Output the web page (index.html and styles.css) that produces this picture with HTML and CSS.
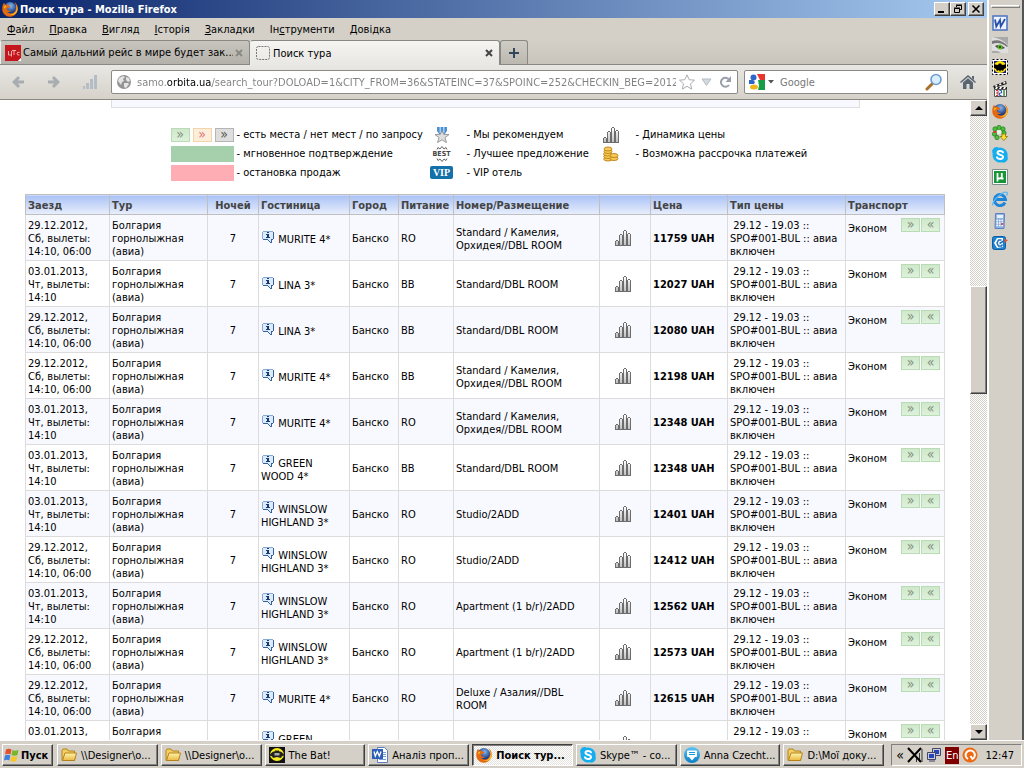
FILE: index.html
```html
<!DOCTYPE html>
<html lang="uk">
<head>
<meta charset="utf-8">
<title>Поиск тура - Mozilla Firefox</title>
<link rel="stylesheet" href="styles.css">
</head>
<body>
<svg class="defs" aria-hidden="true">
  <defs>
    <linearGradient id="barv" x2="0" y2="1"><stop offset="0" stop-color="#fff"/><stop offset="1" stop-color="#bbb"/></linearGradient>
    <linearGradient id="blue" x2="0" y2="1"><stop offset="0" stop-color="#5cc4f5"/><stop offset="1" stop-color="#0a7fc4"/></linearGradient>
    <linearGradient id="fold" x2="0" y2="1"><stop offset="0" stop-color="#fff6b0"/><stop offset="1" stop-color="#eab840"/></linearGradient>
    <radialGradient id="globe" cx=".55" cy=".3"><stop offset="0" stop-color="#8bb8e8"/><stop offset="1" stop-color="#173f8c"/></radialGradient>
    <symbol id="i-chart" viewBox="0 0 16 16"><path fill="url(#barv)" d="M0 11h4V5h4V1h4v4h4v11H0z"/><path fill="#6c6c6c" d="M0 11h1v4H0zM1 10h2v1H1zM3 11h1v4H3zM4 5h1v10H4zM5 4h2v1H5zM7 5h1v10H7zM9 0h2v1H9zM8 1h1v14H8zM11 1h1v14h-1zM12 4h1v11h-1zM13 3h2v1h-2zM15 4h1v11h-1zM0 15h16v1H0z"/></symbol>
    <symbol id="i-info" viewBox="0 0 12 12"><path fill="#dcebfb" d="M1 0h10v1h1v7h-2v4L6 9H1V8H0V1h1z"/><path fill="#86a9d6" d="M1 0h10v1H1zM0 1h1v7H0z"/><path fill="#35629f" d="M11 1h1v7h-1zM1 8h5v1H1zM9 8h2v1H9zM6 9h1v1H6zM7 10h1v1H7zM8 11h2v1H8zM9 9h1v2H9z"/><path fill="#1b3a70" d="M5 1h2v1H5zM4 3h3v3h1v1H4V6h1V4H4z"/></symbol>
    <symbol id="i-firefox" viewBox="0 0 16 16"><circle cx="8" cy="7.500" r="6.500" fill="url(#globe)"/><path fill="#e36a10" d="M1 3.500Q0 6 .3 9c.5 4 4 7 8 6.700 4-.2 7.300-3.500 7.500-7.700C16 5 14.500 2.500 12.500 1c1.500 2.500 2 4 1.500 6.500C13.500 11 11.500 12.500 9 12.500c-1.500 0-3-.7-3.700-1.800 1.500.6 2.700.4 3.900-.6l-3-.6C5 9 4.800 7.900 5.300 7.100l2-.3L8.500 5 6 4.500 5.800 2.700 4.500 4H3.300L2 1.800z"/><path fill="#fdc21d" d="M13.200 2.500c1.700 2.500 1.900 5.500.6 7.700-1.400 2.600-4.300 3.700-7 2.600 3 2.200 7 .8 8.200-2.300 1.200-3 .2-6-1.800-8zM2.500 5l2-.5-1 2-1.500 1z"/></symbol>
    <symbol id="i-word" viewBox="0 0 16 16"><path fill="#eef4ff" stroke="#4a72c0" stroke-width="1.500" d="M1 1h14v14H1z"/><path fill="none" stroke="#2450a8" stroke-width="1.800" d="M3 4.500l1.300 7L8 5l.7 6.500L13 4"/></symbol>
    <symbol id="i-worddoc" viewBox="0 0 16 16"><path fill="#fff" stroke="#5b7fc0" d="M5.500.5h7l3 3v12h-10z"/><path stroke="#7d9cd0" d="M11 5.500h3M11 7.500h3M11 9.500h3M7 12.500h7"/><path fill="#2d5fb8" d="M0 2h11v10H0z"/><path fill="none" stroke="#fff" stroke-width="1.300" d="M2 4.500L3.300 9l2-4.500 2 4.500L9 4.500"/></symbol>
    <symbol id="i-folder" viewBox="0 0 16 16"><path fill="#f3cf62" stroke="#b5821a" stroke-linejoin="round" d="M1 13.500v-10l1-1.500h4l1.500 2h6v9.500z"/><path fill="url(#fold)" stroke="#b5821a" stroke-linejoin="round" d="M1.500 13.500L4 6h11.500l-2 7.500z"/></symbol>
    <symbol id="i-bat" viewBox="0 0 16 16"><path fill="#111" d="M0 0h16v16H0z"/><ellipse cx="8" cy="7.500" rx="7" ry="6.500" fill="#f6ec20"/><path fill="#222" d="M0 9q3-5 5.500-4.500Q7 2.500 8 4q1-1.500 2.500.5Q13 4 16 9q-3-1-4 2l-4-1-4 1Q3 8 0 9z"/><path fill="#aaa" d="M5.500 6h5v2.500h-5z"/></symbol>
    <symbol id="i-bat2" viewBox="0 0 16 16"><path fill="#fff" stroke="#000" stroke-dasharray="2 2" d="M.5.5h15v15H.5z"/><path fill="#18187a" d="M2 2h12v12H2z"/><ellipse cx="8" cy="8" rx="6.500" ry="6" fill="#ffe800"/><path fill="#000" d="M2 5l3 1 1.500-.5L7 4l1 1 1-1 .5 1.500L11 6l3-1v4l-2 1-1 2-2-1-1 2-1-2-2 1-1-2-2-1z"/></symbol>
    <symbol id="i-skype" viewBox="0 0 16 16"><path fill="#14aef0" d="M4.500 0A4.500 4.500 0 0 0 .7 6.500 7.500 7.500 0 0 0 9.600 15.300 4.500 4.500 0 0 0 15.500 9.500 7.500 7.500 0 0 0 6.800.7 4 4 0 0 0 4.500 0z"/><path fill="none" stroke="#fff" stroke-width="2" stroke-linecap="round" d="M11 5.300C10 3.500 5.500 3.300 5.500 5.800S11 7.500 11 10s-4.800 2.400-6 .4"/></symbol>
    <symbol id="i-chat" viewBox="0 0 16 16"><circle cx="8" cy="8" r="8" fill="url(#blue)"/><path fill="#fff" d="M4 3.500h8q1 0 1 1V9q0 1-1 1h-1l-3 3.500L5 10H4Q3 10 3 9V4.500q0-1 1-1z"/><path stroke="#179bdc" d="M5 5.500h6M5 7.500h6"/></symbol>
    <symbol id="i-win" viewBox="0 0 16 16"><path fill="#e3502b" d="M2 2.500q3-1.500 5.500 0l-1 5q-2.500-1.500-5.500 0z"/><path fill="#76b82a" d="M8.500 3q2.500 1.500 6 0l-1 5q-3 1.500-6 0z"/><path fill="#3c7fe0" d="M1 8.500q3-1.500 5.300 0l-1 5q-2.500-1.500-5.300 0z"/><path fill="#f8c62a" d="M7.300 9q2.700 1.500 6 0l-1 5q-3 1.500-6 0z"/></symbol>
    <symbol id="i-eye" viewBox="0 0 16 16"><path fill="#a9a9a9" d="M0 0h16v16H0z"/><path fill="#dedede" d="M0 0q9 1 16 8v8H9Q6 13 0 14z"/><path fill="#777" d="M0 4q8-3 16 5l-1 1Q8 4 0 7z"/><path fill="#444" d="M3 9q5-3 10 2-6 3-10-2z"/><circle cx="8" cy="10" r="2.500" fill="#62b82a"/><circle cx="8" cy="10" r="1" fill="#163a0a"/></symbol>
    <symbol id="i-movie" viewBox="0 0 16 16"><path fill="#222" d="M1 5L14 0l.8 3L2 7z"/><path fill="#fff" d="M3 4.500l2-.8.5 1.500-2 .7zM7 3l2-.8.5 1.500-2 .7zM11 1.500l2-.8.5 1.500-2 .7z"/><path fill="#222" d="M2 6h13v2.500H2z"/><path fill="#fff" d="M4 6h2l-1 2H3zM8 6h2L9 8H7zM12 6h2l-1 2h-2z"/><path fill="#f6f6f6" stroke="#555" d="M2.500 8.500h12v7h-12z"/><path fill="none" stroke="#c33" d="M4 9.500h2v5H4M4 12h2"/><path fill="none" stroke="#2560c0" d="M7.500 9.500h2V12h-2v2.500h2"/><path stroke="#278a3a" stroke-width="1.400" d="M12 9v6"/></symbol>
    <symbol id="i-icq" viewBox="0 0 16 16"><g fill="#4cc03a" stroke="#157018" stroke-width=".6"><circle cx="7" cy="2.500" r="2.200"/><circle cx="11" cy="4" r="2.200"/><circle cx="3" cy="4" r="2.200"/><circle cx="12" cy="8" r="2.200"/><circle cx="2.500" cy="9" r="2.200"/><circle cx="5" cy="12.500" r="2.200"/></g><circle cx="7" cy="7" r="2.300" fill="#e9f5df"/><path fill="#d33" d="M1.500 6h3v2h-3z"/><path fill="#ffe12a" stroke="#7a6a00" stroke-width=".7" d="M10 9h3.500v2.500h2L11.800 15.500l-3.800-4h2z"/></symbol>
    <symbol id="i-utor" viewBox="0 0 16 16"><path fill="#fff" stroke="#7c8f8a" d="M.5.5h15v15H.5z"/><path fill="#179436" d="M2 2h12v12H2z"/><path fill="none" stroke="#fff" stroke-width="1.800" d="M5.500 4v8.500M5.500 4v4q0 1.500 2 1.500 2.300 0 2.300-2V4v5.500h1.700"/></symbol>
    <symbol id="i-ie" viewBox="0 0 16 16"><path fill="none" stroke="#1d86d8" stroke-width="3" d="M13 11.500A5.500 5.500 0 1 1 13.500 8.500H4"/><path fill="none" stroke="#57b8f2" stroke-width="1.300" d="M1 14.500C-1 11 11-1 15 1.500q1 1-.5 3"/></symbol>
    <symbol id="i-calc" viewBox="0 0 16 16"><path fill="#8fb2e4" stroke="#5f82bd" d="M3.500.5h9l-.5 15H3z"/><path fill="#e8f2ff" d="M5 2h6v3H5z"/><path stroke="#fff" stroke-width="1.500" stroke-dasharray="1.500 1" d="M4.500 7.500h6.500M4.500 10h6.500M4.500 12.500h6.500"/><path fill="#d54" d="M9 10h2v2H9z"/></symbol>
    <symbol id="i-mail" viewBox="0 0 16 16"><rect x=".5" y="1.500" width="13" height="13" rx="2" fill="#1d82d0" stroke="#0b5ea5"/><path fill="#fff" d="M5 3h6v9l-6 1-3-5z"/><path fill="none" stroke="#1d6fc0" stroke-width="1.500" d="M9.500 5H6.500L5 8l1.500 3h3l1-1.500M7.500 8.500l5-3"/><path fill="#e4572a" d="M12 4l4 1-3 3z"/></symbol>
    <symbol id="i-globe" viewBox="0 0 16 16"><circle cx="8" cy="8" r="7" fill="#949494"/><path fill="#e4e4e4" d="M3 4l4-2 2 1-2 2 1 2-2 1-1 3-3-4zM10 3l3 1 1 3-2 1-2-2zM8 9l4 0 1 1-3 4-2-1z"/></symbol>
    <symbol id="i-medal" viewBox="0 0 16 16"><path fill="#4d8fd0" d="M3 0h10v4l-3 4H6L3 4z"/><path fill="#a8cff2" d="M5.500 0H7v6H5.500zM9 0h1.500v6H9z"/><path fill="#dedede" stroke="#888" stroke-width=".8" d="M8 3.500l1.700 3.800 5.300.3-4 3 1.500 5L8 12.800l-4.500 2.800 1.500-5-4-3 5.300-.3z"/></symbol>
    <symbol id="i-crown" viewBox="0 0 16 4"><path fill="none" stroke="#666" d="M3 3.500L4 1.500l2 1.500 2-2.500L10 3l2-1.500 1 2"/></symbol>
    <symbol id="i-coins" viewBox="0 0 16 16"><g fill="#f7ca55" stroke="#bc8018" stroke-width=".9"><ellipse cx="5" cy="13" rx="4.300" ry="2"/><ellipse cx="5" cy="10.500" rx="4.300" ry="2"/><ellipse cx="4.500" cy="8" rx="4" ry="2"/><ellipse cx="5" cy="5.500" rx="4" ry="2"/><ellipse cx="5" cy="3" rx="4" ry="2"/><ellipse cx="11" cy="12.500" rx="4" ry="2"/><ellipse cx="11" cy="9.500" rx="4" ry="2"/></g></symbol>
  </defs>
</svg>

<div class="desktop">
  <div class="window">
    <header class="titlebar">
      <svg class="ico"><use href="#i-firefox"/></svg>
      <h1 class="title">Поиск тура - Mozilla Firefox</h1>
      <div class="winbtns">
        <button class="wb" aria-label="Згорнути"><svg viewBox="0 0 12 10"><path d="M2 7h6v2H2z"/></svg></button><button class="wb" aria-label="Відновити"><svg viewBox="0 0 12 10"><path fill="none" stroke="#000" d="M4.500 3V1.500h5v4H8M4 1h6M2.500 4.500h5v4h-5zM2 4h6"/></svg></button>
        <button class="wb wb-close" aria-label="Закрити"><svg viewBox="0 0 12 10"><path fill="none" stroke="#000" stroke-width="1.600" d="M2.500 1.500l7 7M9.500 1.500l-7 7"/></svg></button>
      </div>
    </header>
    <nav class="menubar">
      <button class="menu"><u>Ф</u>айл</button><button class="menu"><u>П</u>равка</button><button class="menu"><u>В</u>игляд</button><button class="menu"><u>І</u>сторія</button><button class="menu"><u>З</u>акладки</button><button class="menu">Ін<u>с</u>трументи</button><button class="menu"><u>Д</u>овідка</button>
    </nav>
    <div class="tabs">
      <div class="tab">
        <svg class="ico" viewBox="0 0 16 16"><path fill="#c4161c" d="M0 0h16v13l-3 3H0z"/><path fill="none" stroke="#f2b0b0" d="M3.500 6v4h3V6M6.500 10v1.500M7 5.500h4M9 5.500V10M14.500 7.500q-2.500-1-2.500 1t2.500 1.500"/><path fill="#fff" d="M16 13v3h-3z"/></svg>
        <span class="tabname">Самый дальний рейс в мире будет зак...</span>
        <button class="x dim" aria-label="Закрити вкладку"><svg viewBox="0 0 8 8"><path d="M1 1l6 6M7 1L1 7"/></svg></button>
      </div>
      <div class="tab active">
        <svg class="ico" viewBox="0 0 16 16"><rect x="1.500" y="1.500" width="13" height="13" rx="2" fill="none" stroke="#777" stroke-dasharray="2 1"/></svg>
        <span class="tabname">Поиск тура</span>
        <button class="x" aria-label="Закрити вкладку"><svg viewBox="0 0 8 8"><path d="M1 1l6 6M7 1L1 7"/></svg></button>
      </div>
      <button class="newtab" aria-label="Нова вкладка"><svg viewBox="0 0 12 12"><path stroke="#33475c" stroke-width="2" d="M6 1v10M1 6h10"/></svg></button>
    </div>
    <div class="toolbar">
      <button class="nav" aria-label="Назад"><svg viewBox="0 0 14 14"><path fill="#a8adb1" d="M1 7l6-6 2 2-2 2.500h6v3H7L9 11l-2 2z"/></svg></button>
      <button class="nav" aria-label="Вперед"><svg viewBox="0 0 14 14"><path fill="#a8adb1" d="M13 7L7 1 5 3l2 2.500H1v3h6L5 11l2 2z"/></svg></button>
      <button class="nav" aria-label="Статистика"><svg viewBox="0 0 14 14"><path fill="#b4bcc5" d="M0 11h2v3H0zM3 8h3v6H3zM7 4h3v10H7zM11 0h3v14h-3z"/></svg></button>
      <div class="field url">
        <svg class="ico"><use href="#i-globe"/></svg>
        <input class="urlinput" aria-label="Адреса" value="samo.orbita.ua/search_tour?DOLOAD=1&amp;CITY_FROM=36&amp;STATEINC=37&amp;SPOINC=252&amp;CHECKIN_BEG=20121229">
        <button class="fb" aria-label="Закладка"><svg class="ico" viewBox="0 0 16 16"><path fill="#fff" stroke="#a9adb2" d="M8 .8l2.200 4.900 5.300.5-4 3.600 1.200 5.300L8 12.300l-4.700 2.800 1.200-5.300-4-3.600 5.300-.5z"/></svg></button>
        <button class="fb" aria-label="Журнал"><svg class="ico" viewBox="0 0 16 16"><path fill="#d5dade" stroke="#b4bcc4" d="M4 5h9l-4.500 6.500z"/></svg></button>
        <button class="fb" aria-label="Оновити"><svg class="ico" viewBox="0 0 16 16"><path fill="none" stroke="#98a1aa" stroke-width="2" d="M12 5.500A4.500 4.500 0 1 0 12 11"/><path fill="#98a1aa" d="M14 2v6H8.500z"/></svg></button>
      </div>
      <div class="field search">
        <svg class="ico" viewBox="0 0 16 16"><path fill="#fff" d="M0 0h16v16H0z"/><path fill="#e8342c" d="M8 0h8v6h-5z"/><path fill="#179c48" d="M9 6h7v10H9l1-4z"/><circle cx="4.500" cy="3.500" r="3" fill="#2d66c8"/><ellipse cx="5" cy="13" rx="4" ry="2.500" fill="#f1b51c"/><path fill="#2d66c8" d="M0 6h4l2 2-1 2-5 0z"/></svg>
        <svg class="drop" viewBox="0 0 6 4"><path fill="#555" d="M0 0h6L3 3.500z"/></svg>
        <input class="searchinput" aria-label="Пошук" placeholder="Google">
        <button class="fb" aria-label="Шукати"><svg class="mag" viewBox="0 0 18 18"><path stroke="#a9702a" stroke-width="3" stroke-linecap="round" d="M2 16l5-5"/><circle cx="11" cy="6.500" r="5" fill="#d9eefc" stroke="#6f9ccc" stroke-width="1.600"/></svg></button>
      </div>
      <button class="nav home" aria-label="Домівка"><svg viewBox="0 0 16 14"><path fill="#5a6572" d="M8 0l8 7-1 1-7-6-7 6-1-1zM12 1h2v4l-2-2zM3 7.500l5-4.300 5 4.300V14h-3.500V9h-3v5H3z"/></svg></button>
    </div>

    <div class="view">
      <main class="page">
        <div class="panel-end"></div>
        <div class="legend">
          <div class="chips"><span class="chip ok">»</span><span class="chip no">»</span><span class="chip ask">»</span></div><span>- есть места / нет мест / по запросу</span>
          <div class="lico"><svg class="ico"><use href="#i-medal"/></svg></div><span>- Мы рекомендуем</span>
          <div class="lico"><svg class="ico"><use href="#i-chart"/></svg></div><span>- Динамика цены</span>
          <div class="swatch green"></div><span>- мгновенное подтверждение</span>
          <div class="lico best"><svg><use href="#i-crown"/></svg><b>BEST</b><svg class="flip"><use href="#i-crown"/></svg></div><span>- Лучшее предложение</span>
          <div class="lico"><svg class="ico"><use href="#i-coins"/></svg></div><span>- Возможна рассрочка платежей</span>
          <div class="swatch red"></div><span>- остановка продаж</span>
          <div class="lico"><b class="vip">VIP</b></div><span>- VIP отель</span>
        </div>
        <table class="tours">
          <colgroup><col class="c1"><col class="c2"><col class="c3"><col class="c4"><col class="c5"><col class="c6"><col class="c7"><col class="c3"><col class="c9"><col class="c10"><col class="c11"></colgroup>
          <thead><tr><th>Заезд</th><th>Тур</th><th class="mid">Ночей</th><th>Гостиница</th><th>Город</th><th>Питание</th><th>Номер/Размещение</th><th></th><th>Цена</th><th>Тип цены</th><th>Транспорт</th></tr></thead>
          <tbody>
            <tr><td class="date">29.12.2012, Сб, вылеты: 14:10, 06:00</td><td>Болгария горнолыжная (авиа)</td><td class="mid">7</td><td><svg class="info"><use href="#i-info"/></svg>&nbsp;MURITE 4*</td><td>Банско</td><td>RO</td><td>Standard / Камелия, Орхидея//DBL ROOM</td><td class="dyn"><svg class="ico"><use href="#i-chart"/></svg></td><td class="price">11759 UAH</td><td>&nbsp;29.12 - 19.03 :: SPO#001-BUL :: авиа включен</td><td class="tr"><div class="fly"><span>Эконом</span><button class="chip ok">»</button><button class="chip ok">«</button></div></td></tr>
            <tr><td class="date">03.01.2013, Чт, вылеты: 14:10</td><td>Болгария горнолыжная (авиа)</td><td class="mid">7</td><td><svg class="info"><use href="#i-info"/></svg>&nbsp;LINA 3*</td><td>Банско</td><td>BB</td><td>Standard/DBL ROOM</td><td class="dyn"><svg class="ico"><use href="#i-chart"/></svg></td><td class="price">12027 UAH</td><td>&nbsp;29.12 - 19.03 :: SPO#001-BUL :: авиа включен</td><td class="tr"><div class="fly"><span>Эконом</span><button class="chip ok">»</button><button class="chip ok">«</button></div></td></tr>
            <tr><td class="date">29.12.2012, Сб, вылеты: 14:10, 06:00</td><td>Болгария горнолыжная (авиа)</td><td class="mid">7</td><td><svg class="info"><use href="#i-info"/></svg>&nbsp;LINA 3*</td><td>Банско</td><td>BB</td><td>Standard/DBL ROOM</td><td class="dyn"><svg class="ico"><use href="#i-chart"/></svg></td><td class="price">12080 UAH</td><td>&nbsp;29.12 - 19.03 :: SPO#001-BUL :: авиа включен</td><td class="tr"><div class="fly"><span>Эконом</span><button class="chip ok">»</button><button class="chip ok">«</button></div></td></tr>
            <tr><td class="date">29.12.2012, Сб, вылеты: 14:10, 06:00</td><td>Болгария горнолыжная (авиа)</td><td class="mid">7</td><td><svg class="info"><use href="#i-info"/></svg>&nbsp;MURITE 4*</td><td>Банско</td><td>BB</td><td>Standard / Камелия, Орхидея//DBL ROOM</td><td class="dyn"><svg class="ico"><use href="#i-chart"/></svg></td><td class="price">12198 UAH</td><td>&nbsp;29.12 - 19.03 :: SPO#001-BUL :: авиа включен</td><td class="tr"><div class="fly"><span>Эконом</span><button class="chip ok">»</button><button class="chip ok">«</button></div></td></tr>
            <tr><td class="date">03.01.2013, Чт, вылеты: 14:10</td><td>Болгария горнолыжная (авиа)</td><td class="mid">7</td><td><svg class="info"><use href="#i-info"/></svg>&nbsp;MURITE 4*</td><td>Банско</td><td>RO</td><td>Standard / Камелия, Орхидея//DBL ROOM</td><td class="dyn"><svg class="ico"><use href="#i-chart"/></svg></td><td class="price">12348 UAH</td><td>&nbsp;29.12 - 19.03 :: SPO#001-BUL :: авиа включен</td><td class="tr"><div class="fly"><span>Эконом</span><button class="chip ok">»</button><button class="chip ok">«</button></div></td></tr>
            <tr><td class="date">03.01.2013, Чт, вылеты: 14:10</td><td>Болгария горнолыжная (авиа)</td><td class="mid">7</td><td><svg class="info"><use href="#i-info"/></svg>&nbsp;GREEN WOOD 4*</td><td>Банско</td><td>BB</td><td>Standard/DBL ROOM</td><td class="dyn"><svg class="ico"><use href="#i-chart"/></svg></td><td class="price">12348 UAH</td><td>&nbsp;29.12 - 19.03 :: SPO#001-BUL :: авиа включен</td><td class="tr"><div class="fly"><span>Эконом</span><button class="chip ok">»</button><button class="chip ok">«</button></div></td></tr>
            <tr><td class="date">03.01.2013, Чт, вылеты: 14:10</td><td>Болгария горнолыжная (авиа)</td><td class="mid">7</td><td><svg class="info"><use href="#i-info"/></svg>&nbsp;WINSLOW HIGHLAND 3*</td><td>Банско</td><td>RO</td><td>Studio/2ADD</td><td class="dyn"><svg class="ico"><use href="#i-chart"/></svg></td><td class="price">12401 UAH</td><td>&nbsp;29.12 - 19.03 :: SPO#001-BUL :: авиа включен</td><td class="tr"><div class="fly"><span>Эконом</span><button class="chip ok">»</button><button class="chip ok">«</button></div></td></tr>
            <tr><td class="date">29.12.2012, Сб, вылеты: 14:10, 06:00</td><td>Болгария горнолыжная (авиа)</td><td class="mid">7</td><td><svg class="info"><use href="#i-info"/></svg>&nbsp;WINSLOW HIGHLAND 3*</td><td>Банско</td><td>RO</td><td>Studio/2ADD</td><td class="dyn"><svg class="ico"><use href="#i-chart"/></svg></td><td class="price">12412 UAH</td><td>&nbsp;29.12 - 19.03 :: SPO#001-BUL :: авиа включен</td><td class="tr"><div class="fly"><span>Эконом</span><button class="chip ok">»</button><button class="chip ok">«</button></div></td></tr>
            <tr><td class="date">03.01.2013, Чт, вылеты: 14:10</td><td>Болгария горнолыжная (авиа)</td><td class="mid">7</td><td><svg class="info"><use href="#i-info"/></svg>&nbsp;WINSLOW HIGHLAND 3*</td><td>Банско</td><td>RO</td><td>Apartment (1 b/r)/2ADD</td><td class="dyn"><svg class="ico"><use href="#i-chart"/></svg></td><td class="price">12562 UAH</td><td>&nbsp;29.12 - 19.03 :: SPO#001-BUL :: авиа включен</td><td class="tr"><div class="fly"><span>Эконом</span><button class="chip ok">»</button><button class="chip ok">«</button></div></td></tr>
            <tr><td class="date">29.12.2012, Сб, вылеты: 14:10, 06:00</td><td>Болгария горнолыжная (авиа)</td><td class="mid">7</td><td><svg class="info"><use href="#i-info"/></svg>&nbsp;WINSLOW HIGHLAND 3*</td><td>Банско</td><td>RO</td><td>Apartment (1 b/r)/2ADD</td><td class="dyn"><svg class="ico"><use href="#i-chart"/></svg></td><td class="price">12573 UAH</td><td>&nbsp;29.12 - 19.03 :: SPO#001-BUL :: авиа включен</td><td class="tr"><div class="fly"><span>Эконом</span><button class="chip ok">»</button><button class="chip ok">«</button></div></td></tr>
            <tr><td class="date">29.12.2012, Сб, вылеты: 14:10, 06:00</td><td>Болгария горнолыжная (авиа)</td><td class="mid">7</td><td><svg class="info"><use href="#i-info"/></svg>&nbsp;MURITE 4*</td><td>Банско</td><td>RO</td><td>Deluxe / Азалия//DBL ROOM</td><td class="dyn"><svg class="ico"><use href="#i-chart"/></svg></td><td class="price">12615 UAH</td><td>&nbsp;29.12 - 19.03 :: SPO#001-BUL :: авиа включен</td><td class="tr"><div class="fly"><span>Эконом</span><button class="chip ok">»</button><button class="chip ok">«</button></div></td></tr>
            <tr><td class="date">03.01.2013, Чт, вылеты: 14:10</td><td>Болгария горнолыжная (авиа)</td><td class="mid"></td><td><svg class="info"><use href="#i-info"/></svg>&nbsp;GREEN WOOD 4*</td><td></td><td></td><td>Standard/DBL ROOM</td><td class="dyn"><svg class="ico"><use href="#i-chart"/></svg></td><td class="price"></td><td>&nbsp;29.12 - 19.03 :: SPO#001-BUL :: авиа включен</td><td class="tr"><div class="fly"><span>Эконом</span><button class="chip ok">»</button><button class="chip ok">«</button></div></td></tr>
          </tbody>
        </table>
      </main>
      <div class="scroll">
        <button class="sb" aria-label="Вгору"><svg viewBox="0 0 8 4"><path d="M0 4h8L4 0z"/></svg></button>
        <div class="track"><div class="before"></div><div class="thumb"></div><div class="after"></div></div>
        <button class="sb" aria-label="Вниз"><svg viewBox="0 0 8 4"><path d="M0 0h8L4 4z"/></svg></button>
      </div>
    </div>
  </div>

  <aside class="dock">
    <div class="grip"></div>
    <svg class="ico"><use href="#i-word"/></svg>
    <svg class="ico"><use href="#i-eye"/></svg>
    <svg class="ico"><use href="#i-bat2"/></svg>
    <svg class="ico"><use href="#i-movie"/></svg>
    <svg class="ico"><use href="#i-firefox"/></svg>
    <svg class="ico"><use href="#i-icq"/></svg>
    <svg class="ico"><use href="#i-skype"/></svg>
    <svg class="ico"><use href="#i-utor"/></svg>
    <svg class="ico"><use href="#i-ie"/></svg>
    <svg class="ico"><use href="#i-calc"/></svg>
    <svg class="ico"><use href="#i-mail"/></svg>
  </aside>

  <footer class="taskbar">
    <button class="start"><svg class="ico"><use href="#i-win"/></svg>Пуск</button>
    <div class="tasks">
      <button class="task"><svg class="ico"><use href="#i-folder"/></svg><span>\\Designer\o...</span></button>
      <button class="task"><svg class="ico"><use href="#i-folder"/></svg><span>\\Designer\o...</span></button>
      <button class="task"><svg class="ico"><use href="#i-bat"/></svg><span>The Bat!</span></button>
      <button class="task"><svg class="ico"><use href="#i-worddoc"/></svg><span>Аналіз проп...</span></button>
      <button class="task on"><svg class="ico"><use href="#i-firefox"/></svg><span>Поиск тур...</span></button>
      <button class="task"><svg class="ico"><use href="#i-skype"/></svg><span>Skype™ - со...</span></button>
      <button class="task"><svg class="ico"><use href="#i-chat"/></svg><span>Anna Czecht...</span></button>
      <button class="task"><svg class="ico"><use href="#i-folder"/></svg><span>D:\Мої доку...</span></button>
    </div>
    <div class="tray">
      <b class="more">«</b>
      <svg class="ico" viewBox="0 0 16 16"><path fill="none" stroke="#333" d="M9.500 15V10M12.500 15V6M15 15V2"/><path stroke="#000" stroke-width="2" d="M1 1l13 14M14 1L1 15"/></svg>
      <svg class="ico" viewBox="0 0 16 16"><path fill="#ccd" stroke="#446" d="M6.500 1.500h8v7h-8z"/><path fill="#2444b8" d="M8 3h5v4H8z"/><path fill="#ccd" stroke="#446" d="M1.500 5.500h8v7h-8z"/><path fill="#2444b8" d="M3 7h5v4H3z"/><path fill="#889" d="M3 13h6v2H3z"/></svg>
      <span class="lang">En</span>
      <svg class="ico" viewBox="0 0 16 16"><circle cx="8" cy="8" r="7.500" fill="#ee6a12"/><path fill="none" stroke="#fff" stroke-width="2" d="M6 12A4.600 4.600 0 1 1 10.500 12L8.500 9"/></svg>
      <time>12:47</time>
    </div>
  </footer>
</div>
</body>
</html>
```
FILE: styles.css
```css
* { box-sizing: border-box; }
body, button, input { font: 11px/13px "DejaVu Sans Condensed", Tahoma, sans-serif; color: #000; }
body { margin: 0; background: #d4d0c8; }
button { padding: 0; border: 0; background: none; }
input { border: 0; outline: 0; padding: 0; background: none; }
svg { display: block; flex: none; }
.defs { position: absolute; width: 0; height: 0; }
.ico { width: 16px; height: 16px; }

.desktop { display: grid; grid-template: minmax(0, 1fr) 28px / minmax(0, 1fr) 37px; height: 100vh; overflow: hidden; }
.window { display: flex; flex-direction: column; min-width: 0; min-height: 0; }

.titlebar { display: flex; align-items: center; gap: 2px; height: 18px; padding: 0 3px 0 2px; background: linear-gradient(90deg, #0a246a, #a6caf0); }
.title { flex: 1; margin: 0; color: #fff; font-size: 11px; font-weight: bold; }
.winbtns { display: flex; }
.wb { display: flex; align-items: center; justify-content: center; width: 16px; height: 14px; background: #d4d0c8; border: 1px solid; border-color: #fff #404040 #404040 #fff; box-shadow: inset -1px -1px #808080; }
.wb svg { width: 12px; height: 10px; }
.wb-close { margin-left: 2px; }

.menubar { display: flex; height: 22px; }
.menu { padding: 0 7px; }
.menu + .menu { margin-left: 1px; }

.tabs { display: flex; height: 25px; border-bottom: 1px solid #8a8882; background: linear-gradient(#d4d0c8, #c9c5bd); }
.tab { display: flex; align-items: center; gap: 2px; flex: 0 1 250px; min-width: 0; padding: 0 6px 0 4px; border: 1px solid #8a8882; border-bottom: 0; border-left-color: #eee; border-radius: 3px 3px 0 0; background: linear-gradient(#c8c5be, #b4b1aa); white-space: nowrap; }
.tab.active { height: 25px; background: linear-gradient(#f4f4f2, #e8e7e3); }
.tabname { flex: 1; min-width: 0; overflow: hidden; }
.x svg { width: 8px; height: 8px; fill: none; stroke: #444; stroke-width: 2; }
.x.dim svg { stroke: #8b8984; }
.newtab { display: flex; align-items: center; justify-content: center; width: 28px; border: 1px solid #8a8882; border-bottom: 0; border-radius: 3px 3px 0 0; background: linear-gradient(#cfccc5, #bbb8b0); }
.newtab svg { width: 12px; height: 12px; }

.toolbar { display: flex; align-items: center; gap: 6px; height: 35px; padding: 0 11px 0 10px; border-bottom: 1px solid #8a8882; background: linear-gradient(#e8e7e3, #d6d2ca); }
.nav { display: flex; justify-content: center; width: 16px; margin-right: 14px; }
.nav svg { width: 16px; height: 14px; }
.nav + .field { margin-left: -7px; }
.nav.home { margin: 0 0 0 6px; }
.field { display: flex; align-items: center; gap: 3px; height: 24px; min-width: 0; padding: 0 4px; border: 1px solid #8c8a85; border-radius: 2px; background: #fff; }
.url { flex: 1; }
.search { flex: 0 1 204px; }
.urlinput { flex: 1; min-width: 0; margin-left: 2px; color: transparent; background: linear-gradient(90deg, #808080 29px, #000 29px 75px, #808080 75px); background-clip: text; -webkit-background-clip: text; }
.searchinput { flex: 1; min-width: 0; margin-left: 3px; }
.searchinput::placeholder { color: #777; opacity: 1; }
.drop { width: 6px; height: 4px; }
.mag { width: 18px; height: 18px; }

.view { display: flex; flex: 1; min-height: 0; background: #fff; }
.page { flex: 1; min-width: 0; overflow: hidden; padding: 0 25px; }
.panel-end { height: 8px; margin: 0 85px 17px 86px; border: 1px solid #dfdfdf; border-top: 0; background: #f8f9ff; }
.legend { display: grid; grid-template-columns: 63px 187px 37px 126px 37px 164px; grid-auto-rows: 19px; align-items: center; column-gap: 3px; width: fit-content; margin: 0 auto 12px; white-space: nowrap; }
.chips { display: flex; gap: 3px; }
.chip { display: flex; align-items: center; justify-content: center; width: 19px; height: 14px; padding-bottom: 2px; border: 1px solid #b9dcb4; background: linear-gradient(#cfe8cb, #def1db); color: #7d917b; font-size: 14px; line-height: 10px; }
.chip.no { border-color: #f3d3a8; background: #fdeedb; color: #e57373; }
.chip.ask { border-color: #b5b5b5; background: #dedede; color: #555; }
.swatch { height: 16px; }
.green { background: #a6cfab; }
.red { background: #ffadb4; }
.lico { display: flex; flex-direction: column; align-items: center; padding-right: 7px; }
.best svg { width: 16px; height: 4px; }
.best b { font-size: 7px; line-height: 8px; color: #444; }
.flip { transform: rotate(180deg); }
.vip { padding: 0 3px; border-radius: 2px; background: #1470a8; color: #fff; font: bold 10px/13px "Liberation Serif", serif; }

.tours { width: 100%; table-layout: fixed; border-collapse: collapse; }
.c1 { width: 84px; } .c2 { width: 98px; } .c3 { width: 51px; } .c4 { width: 91px; }
.c5 { width: 49px; } .c6 { width: 55px; } .c7 { width: 146px; } .c9 { width: 77px; }
.c10 { width: 118px; } .c11 { width: 99px; }
.tours th { height: 20px; padding: 1px 2px 0; border: 1px solid #bfbfbf; background: linear-gradient(#a9c2f5, #e9effc); color: #444; text-align: left; white-space: nowrap; }
.tours td { height: 46px; padding: 4px 2px 2px; border: 1px solid #dcdcdc; }
.tours .date { padding-right: 12px; }
.tours tbody tr:nth-child(odd) { background: #f8f9ff; }
.tours .mid { text-align: center; }
.tours .dyn { padding: 3px 6px 3px 2px; }
.dyn .ico { margin: 0 auto; }
.info { display: inline-block; width: 12px; height: 12px; margin: 0 1px; vertical-align: baseline; }
.price { font-weight: bold; }
.tours .tr { padding-top: 3px; vertical-align: top; }
.fly { display: flex; gap: 1px; padding-right: 2px; }
.fly span { flex: 1; padding-top: 4px; }

.scroll { display: flex; flex-direction: column; width: 17px; }
.sb, .thumb, .start, .task { background: #d4d0c8; border: 1px solid; border-color: #fff #404040 #404040 #fff; box-shadow: inset -1px -1px #808080; }
.sb { display: flex; align-items: center; justify-content: center; height: 16px; }
.sb svg { width: 8px; height: 4px; }
.track { display: flex; flex-direction: column; flex: 1; background: repeating-conic-gradient(#fff 0 25%, #d4d0c8 0 50%) 0 0 / 2px 2px; }
.before { flex: 171; }
.thumb { flex: 106; }
.after { flex: 331; }

.dock { display: flex; flex-direction: column; align-items: center; gap: 6px; padding: 5px 11px 0 0; border-left: 2px solid #fff; border-right: 2px solid #555; }
.grip { align-self: stretch; height: 3px; margin: 0 -9px 1px 2px; border: 1px solid; border-color: #fff #808080 #808080 #fff; }

.taskbar { grid-column: 1 / -1; display: flex; gap: 4px; padding: 3px 2px 2px; border-top: 1px solid #fff; background: #d4d0c8; }
.start { display: flex; align-items: center; gap: 1px; width: 51px; padding-left: 1px; font-weight: bold; }
.tasks { display: flex; flex: 1; gap: 3px; min-width: 0; }
.task { display: flex; align-items: center; gap: 4px; flex: 1 1 0; min-width: 0; padding: 0 3px; white-space: nowrap; overflow: hidden; }
.task.on { border-color: #404040 #fff #fff #404040; box-shadow: inset 1px 1px #808080; background: repeating-conic-gradient(#fff 0 25%, #e4e1dc 0 50%) 0 0 / 2px 2px; font-weight: bold; }
.tray { display: flex; align-items: center; gap: 3px; margin-left: 3px; padding: 0 7px 0 4px; border: 1px solid; border-color: #808080 #fff #fff #808080; }
.more { font-size: 14px; font-weight: normal; }
.tray time { margin-left: 4px; }
.lang { padding: 2px 1px; background: #800000; color: #fff; }
```
